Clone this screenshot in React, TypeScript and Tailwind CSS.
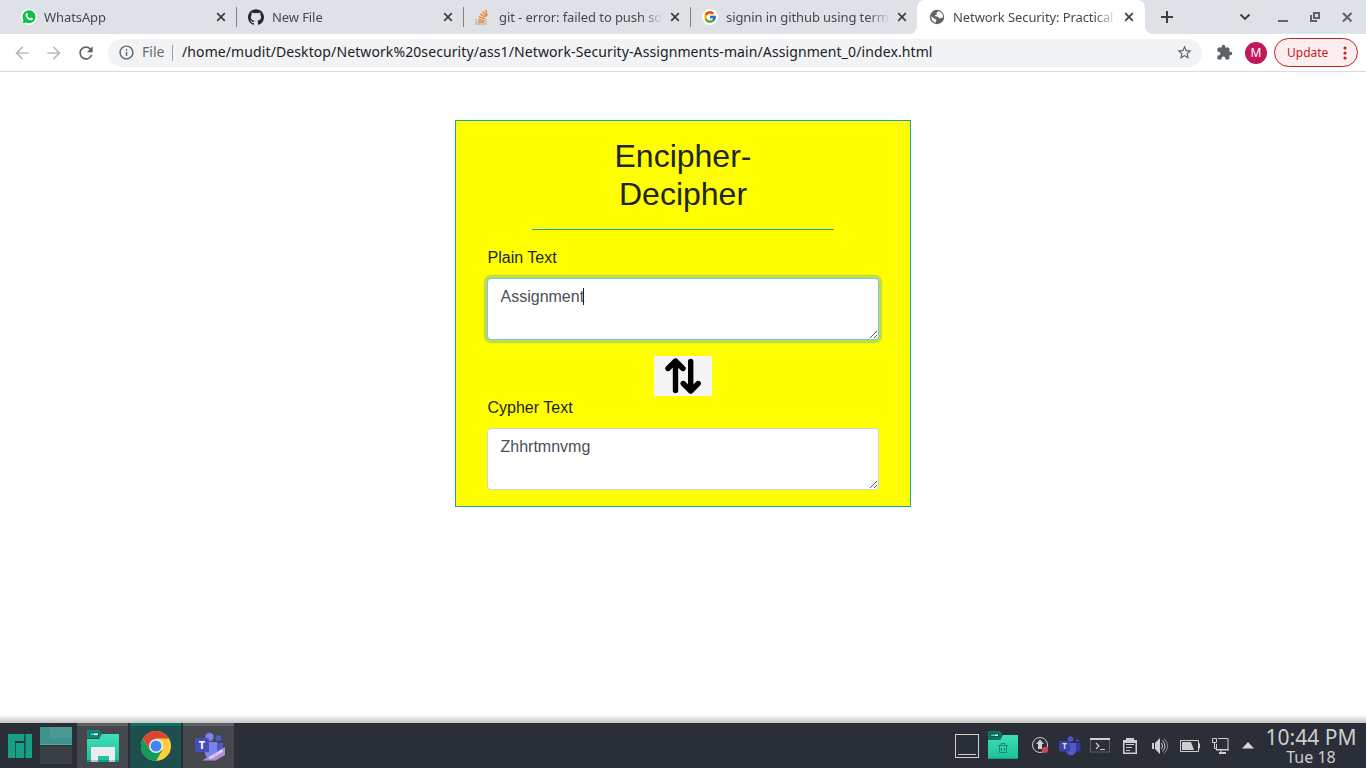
import React from "react";
import { SiGithub } from "react-icons/si";
import { FcGoogle } from "react-icons/fc";
import { MdArrowBack, MdArrowForward, MdRefresh, MdInfoOutline, MdStarBorder, MdExtension } from "react-icons/md";

const StackIcon = () => (
  <svg width="16" height="16" viewBox="0 0 16 16" fill="none">
    <path d="M1 10v5h10v-5" stroke="#bcbbbb" strokeWidth="1.3" />
    <path d="M2.8 13h6.5M3 10.6l6.4.7M3.6 7.8l6.2 1.8M5.2 4.9l5.4 3.4M7.6 2.4l3.9 5M10.8.8l1.2 6" stroke="#f48024" strokeWidth="1.3" />
  </svg>
);

const WhatsIcon = () => (
  <span className="flex size-4 items-center justify-center rounded-full bg-white">
    <svg width="16" height="16" viewBox="0 0 16 16">
      <path d="M.5 15.5l1-3.8A7.4 7.4 0 1 1 4.6 14.4z" fill="#fff" />
      <path d="M1.5 14.5l1-3.2A6.5 6.5 0 1 1 5 13.6z" fill="#0dc143" />
      <path d="M5.3 4.3c.5-.4 1-.3 1.2.2l.5 1.2c.1.4-.3.7-.6 1.1.6 1.3 1.6 2.1 2.8 2.6.5-.4.7-1 1.1-.8l1.4.7c.4.2.1 1.2-.5 1.6-1.5 1-4.2-.4-5.5-2C4.400 7.400 4 5.400 5.300 4.300z" fill="#fff" />
    </svg>
  </span>
);

const GoogleIcon = () => (
  <span className="flex size-4 items-center justify-center rounded-full bg-white">
    <FcGoogle size={14} />
  </span>
);

const GlobeIcon = () => (
  <svg width="16" height="16" viewBox="0 0 16 16">
    <circle cx="8" cy="8" r="7.2" fill="#5f6368" />
    <path d="M9.300 2.300c-1.200.5-2 1.300-1.600 2.300.4.900-.2 1.400-1.200 1.400-.9 0-.7 1.200.2 1.400 1.500.2 2.900.1 3.300 1.400.3 1 1.300.6 2 .3l2-.6a5.900 5.900 0 0 0-4.700-6.200z" fill="#fff" />
    <path d="M2.200 7.200l3 2.400c.6.500 1 .5 1.600.6.900.2.700 1 .3 1.500-.5.600-.3 1.300-.1 2.100a5.900 5.900 0 0 1-4.800-6.600z" fill="#fff" />
  </svg>
);

const CloseIcon = ({ className = "" }: { className?: string }) => (
  <svg className={className} width="16" height="16" viewBox="0 0 16 16" fill="none">
    <path d="M4.200 4.200l7.600 7.600M11.800 4.200l-7.600 7.600" stroke="#3c4043" strokeWidth="1.7" />
  </svg>
);

type TabProps = { icon: React.ReactNode; title: string; active?: boolean; divider?: boolean; first?: boolean };

const Tab = ({ icon, title, active, divider, first }: TabProps) => (
  <div className={`relative flex h-[34px] shrink-0 items-center ${first ? "pl-[11.500px]" : "pl-3"} ${active ? "w-[228px] rounded-t-lg bg-white" : "w-[227px]"}`}>
    {active && (
      <>
        <svg className="absolute bottom-0 -left-2" width="8" height="8"><path d="M8 0v8H0a8 8 0 0 0 8-8z" fill="#fff" /></svg>
        <svg className="absolute -right-2 bottom-0" width="8" height="8"><path d="M0 0v8h8a8 8 0 0 1-8-8z" fill="#fff" /></svg>
      </>
    )}
    <span className="flex size-4 shrink-0 items-center justify-center">{icon}</span>
    <span className={`shrink-0 overflow-hidden text-[13px] leading-[18px] tracking-[-0.09px] whitespace-nowrap text-[#45494d] [mask-image:linear-gradient(to_right,black_142px,transparent_164px)] ${first ? "ml-[7.500px] w-[164px]" : "ml-2 w-[163px]"}`}>
      {title}
    </span>
    <CloseIcon className="ml-[5px] shrink-0" />
    {divider && <span className="absolute top-[7px] right-[-1px] h-5 w-px bg-[#808387]" />}
  </div>
);

const WindowControls = () => (
  <div className="ml-auto flex items-center pr-[11px]">
    <svg width="16" height="16" viewBox="0 0 16 16" fill="none"><path d="M3.500 5.500l4.500 4.500 4.500-4.500" stroke="#3c4043" strokeWidth="1.900" /></svg>
    <svg className="ml-[22px]" width="16" height="16"><path d="M3 11h10v2H3z" fill="#5f6368" /></svg>
    <svg className="ml-4" width="16" height="16" fill="none" stroke="#5f6368" strokeWidth="2"><path d="M7 4h5v5H7zM4 6v6h6" /></svg>
    <svg className="ml-4" width="16" height="16" fill="none" stroke="#5f6368" strokeWidth="2"><path d="M4 4l8.500 8.500M12.500 4L4 12.500" /></svg>
  </div>
);

const TabStrip = () => (
  <div className="flex h-[34px] bg-[#dee1e6] pl-[9px]">
    <Tab icon={<WhatsIcon />} title="WhatsApp" divider first />
    <Tab icon={<SiGithub size={16} color="#24292e" />} title="New File" divider />
    <Tab icon={<StackIcon />} title="git - error: failed to push some refs" divider />
    <Tab icon={<GoogleIcon />} title="signin in github using terminal" />
    <Tab icon={<GlobeIcon />} title="Network Security: Practical Assignment" active />
    <svg className="mt-[9px] ml-[14px]" width="16" height="16" stroke="#3c4043" strokeWidth="2"><path d="M8 2v12M2 8h12" /></svg>
    <WindowControls />
  </div>
);

const Toolbar = () => (
  <div className="flex h-[38px] items-center border-b border-[#d9dbdd] bg-white pl-3">
    <MdArrowBack size={20} color="#babcbe" className="shrink-0" />
    <MdArrowForward size={20} color="#babcbe" className="ml-3 shrink-0" />
    <MdRefresh size={20} color="#5f6368" className="ml-3 shrink-0" />
    <div className="ml-3 flex h-7 w-[1094px] shrink-0 items-center rounded-full bg-[#f1f3f4] text-[14px] leading-5">
      <MdInfoOutline size={17} color="#5f6368" className="ml-[9.500px] shrink-0" />
      <span className="ml-[7.500px] w-[30px] pb-0.5 text-[#6a6e73]">File</span>
      <span className="h-4 w-px bg-[#9aa0a6]" />
      <span className="ml-[9px] pb-0.5 tracking-[0.1px] whitespace-nowrap text-[#202124]">
        /home/mudit/Desktop/Network%20security/ass1/Network-Security-Assignments-main/Assignment_0/index.html
      </span>
      <MdStarBorder size={17} color="#5f6368" className="mr-[9.500px] ml-auto shrink-0" />
    </div>
    <MdExtension size={17} color="#5f6368" className="ml-[13.500px] shrink-0" />
    <span className="ml-[12.500px] flex size-[22px] shrink-0 items-center justify-center rounded-full bg-[#c2185b] text-[12px] text-white">M</span>
    <div className="ml-[7px] flex h-[29px] w-[84px] shrink-0 items-center rounded-full border border-[#c5221f] bg-[#fceeee] pl-3 text-[12px] text-[#c5221f]">
      Update
      <svg className="ml-[10.500px]" width="10" height="16" fill="#c5221f"><circle cx="6" cy="3" r="1.600" /><circle cx="6" cy="8" r="1.600" /><circle cx="6" cy="13" r="1.600" /></svg>
    </div>
  </div>
);

const SwapIcon = () => (
  <svg width="58" height="40" viewBox="0 0 58 40" className="block bg-[#f5f5f5]" fill="none" stroke="#000" strokeWidth="5.400" strokeLinecap="round" strokeLinejoin="round">
    <path d="M21.500 34.500V6M14 12.500l7.500-7.500 7.500 7.500M36.700 5.500V34M29.200 27.500l7.500 7.500 7.500-7.500" />
  </svg>
);

const Field = ({ label, value, focused }: { label: string; value: string; focused?: boolean }) => (
  <div>
    <label className="mb-2 block h-6 pl-[0.500px] text-[16px] leading-6 text-[#212529]">{label}</label>
    <div
      className={`relative h-[62px] w-full rounded border bg-white py-1.5 pr-3 pl-[12.500px] text-[16px] leading-6 text-[#495057] ${
        focused ? "border-[#80bdff] shadow-[0_0_0_3.2px_rgba(0,123,255,0.25)]" : "border-[#ced4da]"
      }`}
    >
      <span className="flex items-center">
        {value}
        {focused && <span className="-mt-px -ml-[1.500px] h-[17px] w-px bg-[#222]" />}
      </span>
      <svg className="absolute right-0 bottom-0" width="9" height="9" stroke="#555" strokeWidth="1" shapeRendering="crispEdges"><path d="M1 8l7-7M5 8l3-3" /></svg>
    </div>
  </div>
);

const CipherCard = () => (
  <section className="h-[387px] w-[456px] border border-[#17a2b8] bg-[#ff0] px-[31px] pt-4 font-['Liberation_Sans',Arial,sans-serif]">
    <div className="mx-auto w-[302px] border-b border-[#17a2b8]">
      <h2 className="h-[92px] text-center text-[32px] leading-[38.400px] text-[#212529]">
        Encipher-
        <br />
        Decipher
      </h2>
    </div>
    <div className="pt-4">
      <Field label="Plain Text" value="Assignment" focused />
    </div>
    <div className="flex justify-center pt-4"><SwapIcon /></div>
    <Field label="Cypher Text" value="Zhhrtmnvmg" />
  </section>
);

const ManjaroIcon = () => (
  <svg width="24" height="24" fill="#16a085"><path d="M0 0h16v7H7v17H0zM8 9h8v15H8zM17.500 0H24v24h-6.500z" /><path d="M7.500 8v16M16.750 0v24" stroke="#23554f" /></svg>
);

const FolderIcon = () => (
  <svg width="32" height="32">
    <path d="M0 9h12l3-5h17v28H0z" fill="url(#folder)" />
    <path d="M0 0h12l3 4-3 4H0z" fill="#128a71" />
    <defs><linearGradient id="folder" x1="0" y1="0" x2="0" y2="1"><stop stopColor="#3fe0b9" /><stop offset="1" stopColor="#1cbf97" /></linearGradient></defs>
    <path d="M2 2.500h10v3.500H2z" fill="#0b5c50" /><path d="M3 3.300h4v2H3z" fill="#35c8ea" /><path d="M7 3.300h4v2H7z" fill="#d5f5f5" />
    <path d="M0 30h32v2H0z" fill="#159d7d" />
    <path d="M4 17h24v15h-6v-6H11v6H4z" fill="#ececee" /><path d="M4 30h7v2H4zM22 30h6v2h-6z" fill="#b8c3c4" />
  </svg>
);

const ChromeIcon = () => (
  <svg width="30" height="30" viewBox="0 0 30 30">
    <circle cx="15" cy="15" r="15" fill="#ffcd40" />
    <path d="M2 7.500A15 15 0 0 1 28 7.500H15L8.500 18.750z" fill="#db4437" />
    <path d="M2 7.500A15 15 0 0 0 15 30l6.500-11.250h-13z" fill="#0f9d58" />
    <circle cx="15" cy="15" r="7" fill="#f1f1f1" /><circle cx="15" cy="15" r="5.500" fill="#4285f4" />
  </svg>
);

const TeamsIcon = ({ preview }: { preview?: boolean }) =>
  preview ? (
    <svg width="30" height="30">
      <circle cx="23.500" cy="6" r="3" fill="#5059c9" /><path d="M20 11h8v8c0 4-5 6-8 4z" fill="#5059c9" />
      <circle cx="14.500" cy="5" r="4.200" fill="#7b83eb" /><path d="M10 10h12v12c0 6-12 7-12-1z" fill="#7b83eb" />
      <rect y="6" width="14" height="14" rx="1.500" fill="#464eb8" />
      <text x="7" y="17" textAnchor="middle" fill="#fff" fontSize="11" fontWeight="700" className="font-['Noto_Sans',sans-serif]">T</text>
      <path d="M7 28.500L30 15v8l-9.500 5.500z" fill="#b38ae0" />
      <text transform="translate(15 27.500) rotate(-31)" fill="#fff" fontSize="3.500" fontWeight="700" className="font-['Noto_Sans',sans-serif]">PREVIEW</text>
    </svg>
  ) : (
    <svg width="22" height="20">
      <circle cx="18.500" cy="4.500" r="2" fill="#333b9c" /><path d="M15 7h6.500v6c0 3-4 3.500-6.500 2z" fill="#333b9c" />
      <circle cx="11.500" cy="3" r="2.800" fill="#4a55ca" /><path d="M7 7h10v7c0 7-10 7-10 0z" fill="#5059c9" />
      <rect y="5" width="11" height="10.500" rx="1" fill="#3942b0" />
      <text x="5.500" y="13" textAnchor="middle" fill="#ddd" fontSize="8" fontWeight="700" className="font-['Noto_Sans',sans-serif]">T</text>
    </svg>
  );

const SystemTray = () => (
  <div className="ml-auto flex h-full items-center">
    <svg width="24" height="24" fill="none" stroke="#cfcfcf" shapeRendering="crispEdges"><path d="M.5.5h23v23H.500zM3 20.500h18" /></svg>
    <svg className="mb-px ml-[9px]" width="30" height="28">
      <path d="M0 9h12l3-5h15v24H0z" fill="url(#folder)" /><path d="M0 0h12l3 4-3 5H0z" fill="#13735f" /><path d="M0 27h30v1H0z" fill="#159d7d" />
      <path d="M2.500 2.500h8v3h-8z" fill="none" stroke="#075b4b" /><path d="M3 3.500h4v1.500H3z" fill="#35c8ea" /><path d="M7 3.500h3V5H7z" fill="#fff" />
      <path d="M10 14.500h10M11.500 15v6.500h7V15M13 14v-1.500h4V14M13.500 17v2.500M16.500 17v2.500" fill="none" stroke="#168c73" />
    </svg>
    <svg className="ml-[14px]" width="17" height="17">
      <circle cx="8" cy="8" r="7.500" fill="none" stroke="#cfcfcf" /><path d="M8 2.500L12 7h-2v5H6V7H4z" fill="#cfcfcf" /><circle cx="13" cy="13" r="3" fill="#e0404f" />
    </svg>
    <span className="ml-[10px]"><TeamsIcon /></span>
    <svg className="ml-[9px]" width="20" height="15"><path d="M.5 1v13h19V1" fill="none" stroke="#5d6166" /><path d="M0 0h20v2H0z" fill="#cfcfcf" /><path d="M6 5l3 3-3 3M10 11.500h5" fill="none" stroke="#cfcfcf" strokeWidth="1.200" /></svg>
    <svg className="ml-[13px]" width="14" height="16"><path d="M3 0h8v2h3v14H0V2h3z" fill="#cfcfcf" /><path d="M1.500 5h11v9.500h-11z" fill="#2a2e36" /><path d="M3 6.500h8M3 9.500h6M3 12.500h4" stroke="#cfcfcf" /></svg>
    <svg className="ml-[15px]" width="17" height="16" fill="none" stroke="#cfcfcf"><path d="M0 5h2v6H0zM3 5l5-5v16l-5-5z" fill="#cfcfcf" stroke="none" /><path d="M9.500 5q2 3 0 6M10.500 2.500q5 5.500 0 11" /><path d="M12 .5q7.500 7.500 0 15" stroke="#858a90" /></svg>
    <svg className="ml-[11px]" width="20" height="12" fill="none" stroke="#cfcfcf"><path d="M.5.5h18v11H.500zM19.500 3.500v5" /><path d="M2 2h9l3 8H2z" fill="#cfcfcf" stroke="none" /></svg>
    <svg className="ml-3" width="17" height="16" fill="none" stroke="#cfcfcf"><path d="M.5.5h4v4h-4zM2.500 5v5.500H4M6 .5h10v11H4.500V6M9 12v2" /><path d="M4 11h13v1.500H4zM7 14h7v2H7z" fill="#cfcfcf" stroke="none" /></svg>
    <svg className="ml-[13px]" width="12" height="7"><path d="M0 6.500L6 0l6 6.500z" fill="#d5d5d5" /></svg>
    <div className="ml-[10px] flex h-full w-[94px] flex-col items-center pt-[3px] text-[#cdcecf]">
      <span className="text-[21px] leading-[23px] whitespace-nowrap">10:44 PM</span>
      <span className="text-[16px] leading-[17px] whitespace-nowrap">Tue 18</span>
    </div>
    <span className="w-2" />
  </div>
);

const Taskbar = () => (
  <footer className="flex h-[45px] items-center bg-[#2a2e36] pl-2">
    <ManjaroIcon />
    <div className="ml-2 flex h-full w-8 flex-col pt-1">
      <div className="h-[18px] border-b border-[#57aaa1] bg-[#3f918b]"><div className="ml-2.5 h-[11px] bg-[#4b9993]" /></div>
      <div className="mt-px h-[18px] bg-[#3a3f43]" />
    </div>
    <div className="ml-[5px] flex h-full w-[51px] items-center justify-center border-t-[3px] border-[#5c6064] bg-[#44484c] pb-0.5"><FolderIcon /></div>
    <div className="ml-0.5 flex h-full w-[51px] items-center justify-center border-t-[3px] border-[#0b7364] bg-[#1d4f4f] pb-0.5"><ChromeIcon /></div>
    <div className="ml-0.5 flex h-full w-[51px] items-center justify-center border-t-[3px] border-[#5c6064] bg-[#44484c] pl-[3px]"><TeamsIcon preview /></div>
    <SystemTray />
  </footer>
);

export default function App() {
  return (
    <div className="flex h-[768px] w-[1366px] flex-col overflow-hidden bg-white font-['Noto_Sans',sans-serif]">
      <TabStrip />
      <Toolbar />
      <main className="flex flex-1 flex-col items-center bg-white pt-12">
        <CipherCard />
        <div className="mt-auto h-2 w-full bg-linear-to-b from-white to-[#c4c4c4]" />
      </main>
      <Taskbar />
    </div>
  );
}
